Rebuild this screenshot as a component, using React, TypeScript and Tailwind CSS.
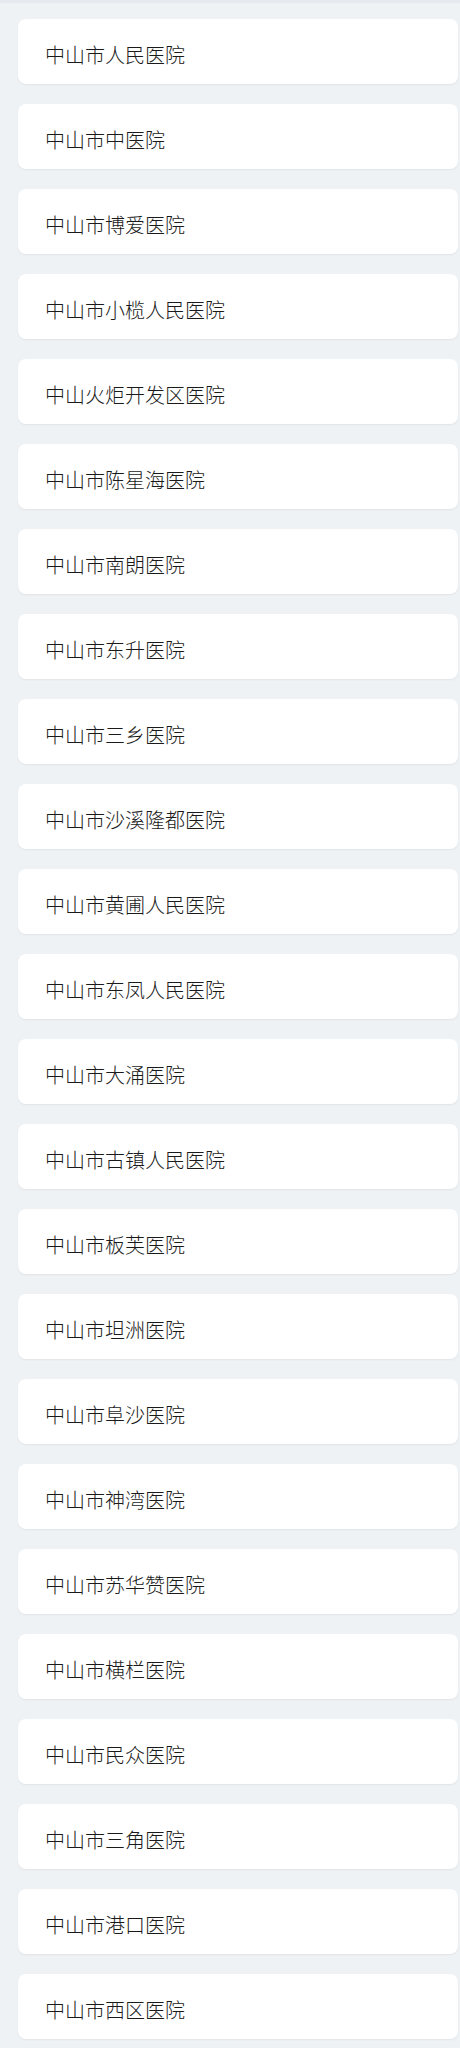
const hospitals = [
  '中山市人民医院',
  '中山市中医院',
  '中山市博爱医院',
  '中山市小榄人民医院',
  '中山火炬开发区医院',
  '中山市陈星海医院',
  '中山市南朗医院',
  '中山市东升医院',
  '中山市三乡医院',
  '中山市沙溪隆都医院',
  '中山市黄圃人民医院',
  '中山市东凤人民医院',
  '中山市大涌医院',
  '中山市古镇人民医院',
  '中山市板芙医院',
  '中山市坦洲医院',
  '中山市阜沙医院',
  '中山市神湾医院',
  '中山市苏华赞医院',
  '中山市横栏医院',
  '中山市民众医院',
  '中山市三角医院',
  '中山市港口医院',
  '中山市西区医院',
];

export default function App() {
  return (
    <div
      className="min-h-screen bg-[#eef2f5]"
      style={{ fontFamily: '"Noto Sans CJK SC", "Noto Sans", sans-serif' }}
    >
      <div className="h-[3px] bg-[#e6eaee]" />
      <ul className="flex flex-col gap-[20px] pt-[16px] pb-[8px] pl-[18px] pr-[2px]">
        {hospitals.map((name, index) => (
          <li
            key={index}
            className="flex h-[65px] items-center rounded-lg bg-white pl-[27px] pt-[6px] text-[20px] font-light text-[#1a1a1a] shadow-[0_1px_2px_rgba(0,0,0,0.06)]"
          >
            {name}
          </li>
        ))}
      </ul>
    </div>
  );
}
